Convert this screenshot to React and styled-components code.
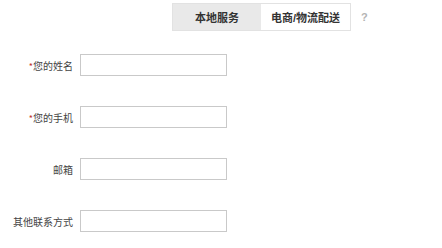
import styled, { createGlobalStyle } from 'styled-components'

const GlobalStyle = createGlobalStyle`
    body {
        margin: 0;
        background: #fff;
        font-family: "Liberation Sans", "Noto Sans CJK SC", sans-serif;
    }
`

const Page = styled.div`
    width: 442px;
    height: 248px;
    overflow: hidden;
`

const TabBar = styled.div`
    display: flex;
    align-items: center;
    padding: 3px 0 0 172px;
`

const Tabs = styled.div`
    display: flex;
    border: 1px solid #e2e2e2;
    height: 26px;
`

const Tab = styled.div`
    width: ${props => props.$w}px;
    display: flex;
    align-items: center;
    justify-content: center;
    font-size: 11px;
    font-weight: bold;
    color: #333;
    background: ${props => (props.$active ? '#fff' : '#e9e9e9')};
`

const Help = styled.span`
    margin-left: 10px;
    font-size: 11px;
    font-weight: bold;
    color: #b4b4b4;
`

const Form = styled.div`
    display: flex;
    flex-direction: column;
    gap: 30px;
    padding-top: 23px;
`

const Row = styled.div`
    display: flex;
    align-items: center;
    gap: 7px;
`

const Label = styled.label`
    width: 73px;
    text-align: right;
    font-size: 10px;
    color: #444;
    font-family: "Noto Sans CJK SC", sans-serif;
`

const Star = styled.span`
    color: #c0302c;
    font-size: 9px;
`

const Input = styled.input`
    box-sizing: border-box;
    width: 147px;
    height: 22px;
    border: 1px solid #c9c9c9;
    outline: none;
    padding: 0 4px;
`

const fields = [
    { label: '您的姓名', required: true },
    { label: '您的手机', required: true },
    { label: '邮箱' },
    { label: '其他联系方式' },
]

const App = () => {
    return (
        <Page>
            <GlobalStyle />
            <TabBar>
                <Tabs>
                    <Tab $w={88}>本地服务</Tab>
                    <Tab $w={89} $active>电商/物流配送</Tab>
                </Tabs>
                <Help>?</Help>
            </TabBar>

            <Form>
                {fields.map(f => (
                    <Row key={f.label}>
                        <Label>
                            {f.required && <Star>*</Star>}
                            {f.label}
                        </Label>
                        <Input type='text' />
                    </Row>
                ))}
            </Form>
        </Page>
    )
}

export default App
